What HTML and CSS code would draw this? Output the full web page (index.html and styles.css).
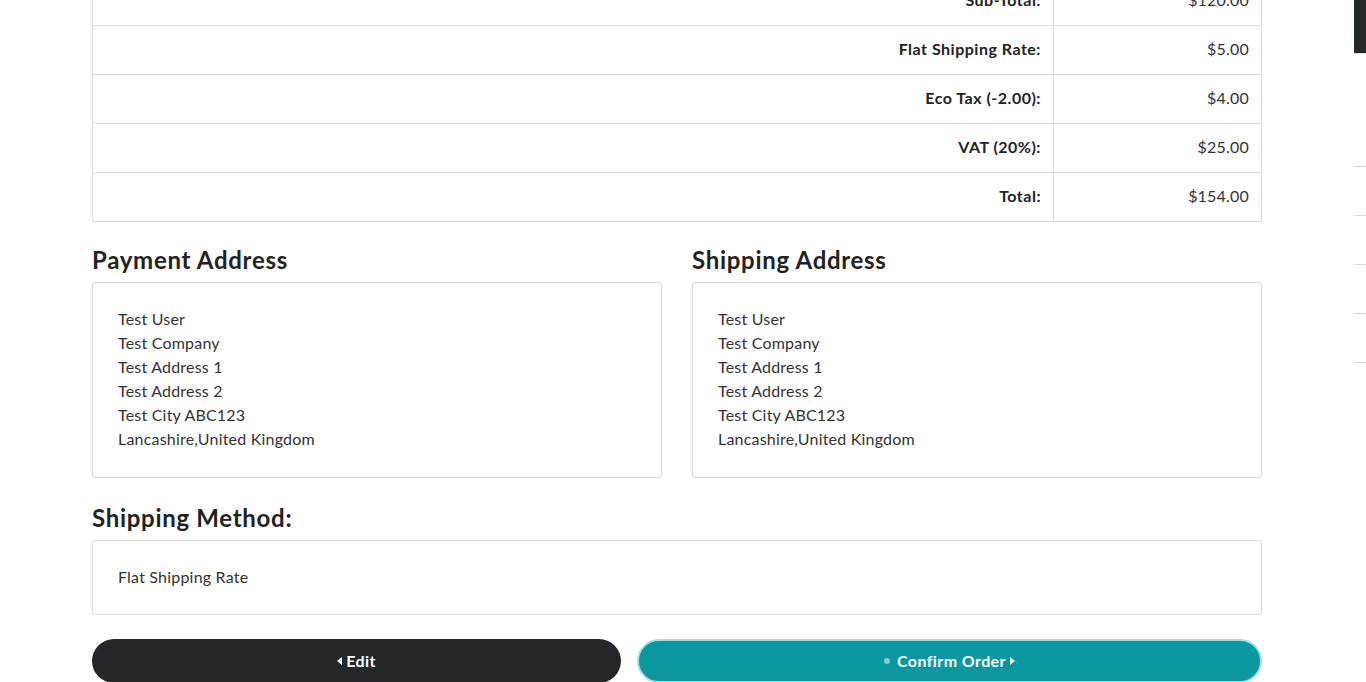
FILE: index.html
```html
<!DOCTYPE html>
<html lang="en">
<head>
<meta charset="utf-8">
<title>Checkout - Confirm Order</title>
<link rel="stylesheet" href="styles.css">
</head>
<body>
<div class="page">
  <main class="content">
    <table class="totals">
      <tbody>
        <tr><th>Sub-Total:</th><td>$120.00</td></tr>
        <tr><th>Flat Shipping Rate:</th><td>$5.00</td></tr>
        <tr><th>Eco Tax (-2.00):</th><td>$4.00</td></tr>
        <tr><th>VAT (20%):</th><td>$25.00</td></tr>
        <tr><th>Total:</th><td>$154.00</td></tr>
      </tbody>
    </table>

    <div class="addresses">
      <section class="address">
        <h2 class="section-title">Payment Address</h2>
        <div class="panel panel-address">
          <div>Test User</div>
          <div>Test Company</div>
          <div>Test Address 1</div>
          <div>Test Address 2</div>
          <div>Test City ABC123</div>
          <div>Lancashire,United Kingdom</div>
        </div>
      </section>
      <section class="address">
        <h2 class="section-title">Shipping Address</h2>
        <div class="panel panel-address">
          <div>Test User</div>
          <div>Test Company</div>
          <div>Test Address 1</div>
          <div>Test Address 2</div>
          <div>Test City ABC123</div>
          <div>Lancashire,United Kingdom</div>
        </div>
      </section>
    </div>

    <section class="method">
      <h2 class="section-title">Shipping Method:</h2>
      <div class="panel">Flat Shipping Rate</div>
    </section>

    <div class="actions">
      <button class="btn btn-dark" type="button"><span class="caret caret-left"></span>Edit</button>
      <button class="btn btn-teal" type="button"><span class="dot"></span>Confirm Order<span class="caret caret-right"></span></button>
    </div>
  </main>
  <aside class="side">
    <div class="side-head"></div>
    <div class="side-item side-item-tall"></div>
    <div class="side-item"></div>
    <div class="side-item"></div>
    <div class="side-item"></div>
    <div class="side-item"></div>
  </aside>
</div>
</body>
</html>
```

FILE: styles.css
```css
* { box-sizing: border-box; }

html, body {
  margin: 0;
  padding: 0;
  background: #fff;
}

body {
  font-family: "Lato", "Noto Sans", sans-serif;
  font-size: 16px;
  line-height: 24px;
  letter-spacing: 0.2px;
  color: #2b2b2b;
  height: 682px;
  overflow: hidden;
}

.page {
  display: flex;
  align-items: flex-start;
}

.content {
  flex: 1;
  display: flex;
  flex-direction: column;
  align-items: center;
}

.content > * {
  width: 1170px;
}

.totals {
  border-collapse: collapse;
  margin-top: -24px;
  margin-bottom: 23px;
}

.totals th,
.totals td {
  border: 1px solid #dcdcdc;
  padding: 11px 12px 13px;
  height: 49px;
  text-align: right;
  vertical-align: middle;
}

.totals th {
  font-weight: 700;
  letter-spacing: 0.5px;
  color: #222;
}

.totals td {
  width: 208px;
  font-weight: 400;
  color: #333;
}

.addresses {
  display: grid;
  grid-template-columns: 1fr 1fr;
  column-gap: 30px;
  margin-bottom: 25px;
}

.section-title {
  margin: 0 0 8px;
  padding-top: 1px;
  font-size: 24px;
  line-height: 27.8px;
  font-weight: 700;
  letter-spacing: 0.7px;
  color: #222;
}

.panel {
  border: 1px solid #dcdcdc;
  border-radius: 3px;
  padding: 24px 25px 25px;
  color: #333;
}

.panel-address {
  padding-bottom: 26px;
}

.method {
  margin-bottom: 24px;
}

.actions {
  display: grid;
  grid-template-columns: 529px 1fr;
  column-gap: 16px;
}

.btn {
  height: 44px;
  border: 0;
  border-radius: 22px;
  font-family: inherit;
  font-size: 16px;
  font-weight: 700;
  letter-spacing: 0.4px;
  color: #fff;
  display: flex;
  align-items: center;
  justify-content: center;
  gap: 4px;
  cursor: pointer;
}

.btn-dark {
  background: #232729;
}

.btn-teal {
  background: #0b979f;
  border: 2px solid #a9dde0;
}

.caret {
  width: 0;
  height: 0;
  border-top: 4.5px solid transparent;
  border-bottom: 4.5px solid transparent;
}

.caret-left {
  border-right: 5px solid #fff;
}

.caret-right {
  border-left: 5px solid #fff;
}

.dot {
  width: 6px;
  height: 6px;
  border-radius: 50%;
  background: #86cdd1;
  margin-right: 3px;
}

.side {
  width: 12px;
  flex: none;
}

.side-head {
  height: 54px;
  background: #262a2b;
  border-bottom: 1px solid #e2e2e2;
}

.side-item {
  height: 49px;
  border-bottom: 1px solid #dadada;
}

.side-item-tall {
  height: 113px;
}
```
